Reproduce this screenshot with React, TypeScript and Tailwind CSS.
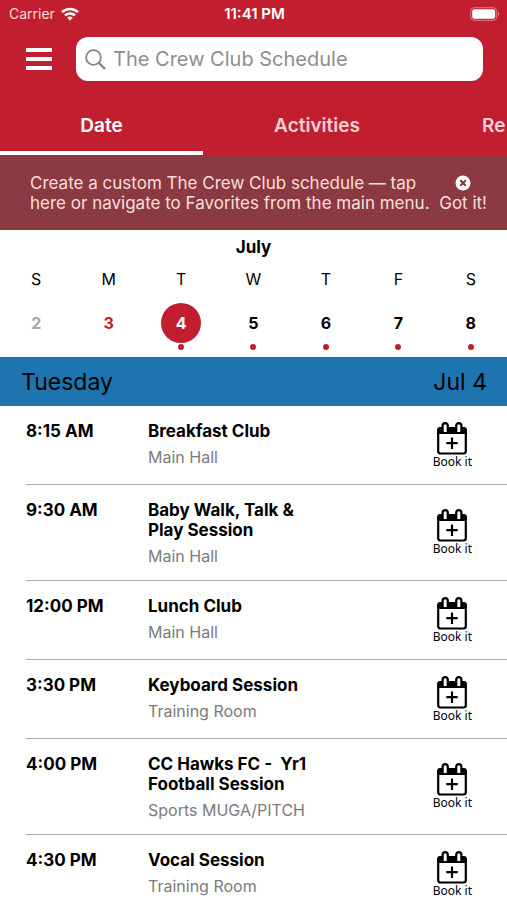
type Day = { letter: string; date: number; tone: string; hasEvents: boolean; selected?: boolean };
type Session = { time: string; title: string; place: string };

const days: Day[] = [
  { letter: 'S', date: 2, tone: 'text-[#a9a9a9]', hasEvents: false },
  { letter: 'M', date: 3, tone: 'text-[#c11f2f]', hasEvents: false },
  { letter: 'T', date: 4, tone: 'bg-[#c11f2f] text-white', hasEvents: true, selected: true },
  { letter: 'W', date: 5, tone: 'text-black', hasEvents: true },
  { letter: 'T', date: 6, tone: 'text-black', hasEvents: true },
  { letter: 'F', date: 7, tone: 'text-black', hasEvents: true },
  { letter: 'S', date: 8, tone: 'text-black', hasEvents: true },
];

const sessions: Session[] = [
  { time: '8:15 AM', title: 'Breakfast Club', place: 'Main Hall' },
  { time: '9:30 AM', title: 'Baby Walk, Talk & Play Session', place: 'Main Hall' },
  { time: '12:00 PM', title: 'Lunch Club', place: 'Main Hall' },
  { time: '3:30 PM', title: 'Keyboard Session', place: 'Training Room' },
  { time: '4:00 PM', title: 'CC Hawks FC -  Yr1 Football Session', place: 'Sports MUGA/PITCH' },
  { time: '4:30 PM', title: 'Vocal Session', place: 'Training Room' },
];

function WifiIcon() {
  return (
    <svg width="18" height="14" viewBox="0 0 18 14" fill="none" stroke="white" strokeWidth="2.5" aria-hidden="true">
      <path d="M1 5.2a11.4 11.4 0 0 1 16 0" />
      <path d="M4 8.4a7.2 7.2 0 0 1 10 0" />
      <path d="M6.2 10.8a3.9 3.9 0 0 1 5.6 0L9 13.8Z" fill="white" stroke="none" />
    </svg>
  );
}

function BatteryIcon() {
  return (
    <svg width="30" height="14" viewBox="0 0 30 14" fill="none" aria-hidden="true">
      <rect x="0.7" y="0.7" width="26" height="12.6" rx="3.6" stroke="#e07f89" strokeWidth="1" />
      <rect x="2.2" y="2.2" width="23" height="9.6" rx="2.2" fill="white" />
      <path d="M28 4.8c1.6.6 1.6 3.8 0 4.4Z" fill="#e07f89" />
    </svg>
  );
}

function SearchIcon() {
  return (
    <svg width="21" height="21" viewBox="0 0 21 21" fill="none" stroke="#858585" aria-hidden="true">
      <circle cx="8.5" cy="8.5" r="7.4" strokeWidth="1.8" />
      <path d="m14 14 6 6" strokeWidth="2.4" />
    </svg>
  );
}

function CalendarPlusIcon() {
  return (
    <svg width="30" height="33" viewBox="0 0 30 33" fill="none" aria-hidden="true">
      <rect x="1.2" y="6.2" width="27.6" height="25.3" rx="2.2" stroke="black" strokeWidth="2.2" />
      <path d="M0.5 12V8a2.8 2.8 0 0 1 2.800-2.800h23.400A2.800 2.800 0 0 1 29.500 8v4Z" fill="black" />
      <path d="M5.800 10V3.500a2.400 2.400 0 0 1 4.800 0V10Z" fill="white" />
      <path d="M19.400 10V3.500a2.400 2.400 0 0 1 4.800 0V10Z" fill="white" />
      <path d="M5.600 10V3.700a2.600 2.600 0 0 1 5.200 0V10M19.200 10V3.700a2.600 2.600 0 0 1 5.200 0V10" stroke="black" strokeWidth="2.200" />
      <path d="M15 15.500v11.500M9.300 21.200h11.400" stroke="black" strokeWidth="2.200" />
    </svg>
  );
}

function CloseIcon() {
  return (
    <svg width="16" height="16" viewBox="0 0 16 16" aria-hidden="true">
      <circle cx="8" cy="8" r="7.5" fill="white" />
      <path d="m5.3 5.3 5.4 5.4M10.7 5.3l-5.4 5.4" stroke="#8b3a43" strokeWidth="2.2" />
    </svg>
  );
}

export default function App() {
  return (
    <div className="h-screen overflow-hidden bg-white font-['Inter','Liberation_Sans',sans-serif] text-base text-black">
      <header className="bg-[#c11f2f]">
        <div className="grid h-7 grid-cols-3 items-center pl-[9px] pr-[7px] text-sm text-white">
          <div className="flex items-center gap-1.5">
            <span className="text-[#fbdcdf]">Carrier</span>
            <WifiIcon />
          </div>
          <span className="text-center text-[15px] font-semibold">11:41 PM</span>
          <span className="flex justify-end"><BatteryIcon /></span>
        </div>
        <div className="flex h-[66px] items-center gap-6 border-b border-[#ae1f2c] pb-1 pl-[26px] pr-6 pt-px">
          <button type="button" aria-label="Menu" className="flex w-[26px] shrink-0 flex-col gap-[5px]">
            <span className="h-1 bg-white" />
            <span className="h-1 bg-white" />
            <span className="h-1 bg-white" />
          </button>
          <label className="flex h-11 min-w-0 flex-1 items-center gap-[7px] rounded-xl bg-white pl-[9px]">
            <SearchIcon />
            <input
              type="search"
              aria-label="Search"
              placeholder="The Crew Club Schedule"
              className="min-w-0 flex-1 bg-transparent text-xl outline-none placeholder:text-[#8e8e8e]"
            />
          </label>
        </div>
        <nav className="flex h-[61px] overflow-hidden text-[19px] font-semibold">
          <button type="button" className="w-[203px] shrink-0 border-b-4 border-white pt-2 text-white">Date</button>
          <button type="button" className="w-[228px] shrink-0 pt-1 text-[#fbd0d4]">Activities</button>
          <button type="button" className="shrink-0 pl-[51px] pt-1 text-[#fbd0d4]">Re</button>
        </nav>
      </header>

      <section className="flex h-[75px] items-center justify-between bg-[#8b3a43] pl-[30px] pr-5 text-[17px] leading-5 text-[#fbdfd9]">
        <p className="whitespace-nowrap">
          Create a custom The Crew Club schedule — tap
          <br />
          here or navigate to Favorites from the main menu.
        </p>
        <button type="button" className="flex shrink-0 flex-col items-center">
          <span className="flex h-5 items-center"><CloseIcon /></span>
          Got it!
        </button>
      </section>

      <section className="h-[127px] pt-[5px]">
        <h2 className="text-center text-[17px] font-bold leading-6">July</h2>
        <div className="grid grid-cols-7">
          {days.map((day) => (
            <div key={day.date} className="flex flex-col items-center">
              <span className="mt-2 leading-6">{day.letter}</span>
              <button
                type="button"
                aria-pressed={!!day.selected}
                className={`mt-3 flex size-10 items-center justify-center rounded-full font-bold ${day.tone}`}
              >
                {day.date}
              </button>
              {day.hasEvents && <span className="mt-px size-[6px] rounded-full bg-[#c11f2f]" />}
            </div>
          ))}
        </div>
      </section>

      <h2 className="flex h-[49px] items-center justify-between bg-[#1d74ae] pl-[21px] pr-5 pt-0.5 text-[23px]">
        <span>Tuesday</span>
        <span>Jul 4</span>
      </h2>

      <ul className="pl-[26px]">
        {sessions.map((session) => (
          <li key={session.time} className="flex min-h-[79px] border-b border-[#a9a9a9] pr-[35px]">
            <time className="w-[122px] shrink-0 pt-[15px] text-[17px] font-bold leading-5">{session.time}</time>
            <div className="w-[170px] pb-[14px] pt-[15px]">
              <h3 className="whitespace-pre-wrap text-[17px] font-bold leading-5">{session.title}</h3>
              <p className="mt-[6px] leading-5 text-[#7b7b7b]">{session.place}</p>
            </div>
            <button type="button" className="ml-auto flex shrink-0 flex-col items-center self-center font-['Noto_Sans',sans-serif] text-xs leading-[14px]">
              <CalendarPlusIcon />
              Book it
            </button>
          </li>
        ))}
      </ul>
    </div>
  );
}
